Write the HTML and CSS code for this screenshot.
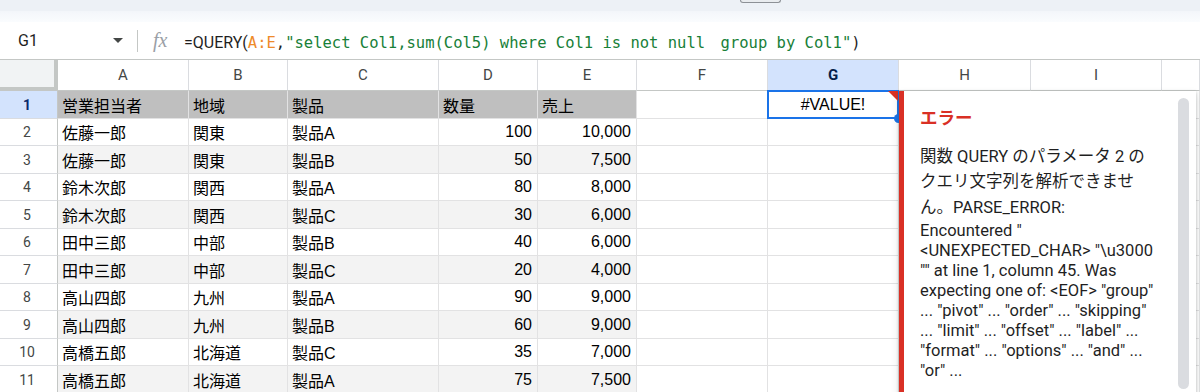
FILE: index.html
```html
<!DOCTYPE html>
<html lang="ja">
<head>
  <meta charset="UTF-8" />
  <title>Sheet - QUERY error</title>
  <link rel="stylesheet" href="styles.css">
</head>
<body>
  <div class="topbar"><span class="tabstub"></span></div>
  <div class="topfade"></div>

  <div class="formula-bar">
    <div class="namebox"><span>G1</span><span class="caret"></span></div>
    <div class="fbar-divider"></div>
    <span class="fx">fx</span>
    <div class="formula"><span class="fn">=QUERY(</span><span class="ref">A:E</span>,<span class="str">"select Col1,sum(Col5) where Col1 is not null　group by Col1"</span>)</div>
  </div>

  <div class="sheet">
    <div class="row header-row">
      <div class="corner"></div>
      <div class="colhead">A</div>
      <div class="colhead">B</div>
      <div class="colhead">C</div>
      <div class="colhead">D</div>
      <div class="colhead">E</div>
      <div class="colhead">F</div>
      <div class="colhead active">G</div>
      <div class="colhead">H</div>
      <div class="colhead">I</div>
      <div class="colhead"></div>
    </div>

    <div class="row titles">
      <div class="rownum active">1</div>
      <div class="cell">営業担当者</div>
      <div class="cell">地域</div>
      <div class="cell">製品</div>
      <div class="cell">数量</div>
      <div class="cell">売上</div>
      <div class="cell blank"></div>
      <div class="cell blank selected">#VALUE!<span class="handle"></span></div>
      <div class="cell blank"></div>
      <div class="cell blank"></div>
      <div class="cell blank"></div>
    </div>

    <div class="row">
      <div class="rownum">2</div>
      <div class="cell">佐藤一郎</div><div class="cell">関東</div><div class="cell">製品A</div>
      <div class="cell num">100</div><div class="cell num">10,000</div>
      <div class="cell blank"></div><div class="cell blank"></div><div class="cell blank"></div><div class="cell blank"></div><div class="cell blank"></div>
    </div>
    <div class="row band">
      <div class="rownum">3</div>
      <div class="cell">佐藤一郎</div><div class="cell">関東</div><div class="cell">製品B</div>
      <div class="cell num">50</div><div class="cell num">7,500</div>
      <div class="cell blank"></div><div class="cell blank"></div><div class="cell blank"></div><div class="cell blank"></div><div class="cell blank"></div>
    </div>
    <div class="row">
      <div class="rownum">4</div>
      <div class="cell">鈴木次郎</div><div class="cell">関西</div><div class="cell">製品A</div>
      <div class="cell num">80</div><div class="cell num">8,000</div>
      <div class="cell blank"></div><div class="cell blank"></div><div class="cell blank"></div><div class="cell blank"></div><div class="cell blank"></div>
    </div>
    <div class="row band">
      <div class="rownum">5</div>
      <div class="cell">鈴木次郎</div><div class="cell">関西</div><div class="cell">製品C</div>
      <div class="cell num">30</div><div class="cell num">6,000</div>
      <div class="cell blank"></div><div class="cell blank"></div><div class="cell blank"></div><div class="cell blank"></div><div class="cell blank"></div>
    </div>
    <div class="row">
      <div class="rownum">6</div>
      <div class="cell">田中三郎</div><div class="cell">中部</div><div class="cell">製品B</div>
      <div class="cell num">40</div><div class="cell num">6,000</div>
      <div class="cell blank"></div><div class="cell blank"></div><div class="cell blank"></div><div class="cell blank"></div><div class="cell blank"></div>
    </div>
    <div class="row band">
      <div class="rownum">7</div>
      <div class="cell">田中三郎</div><div class="cell">中部</div><div class="cell">製品C</div>
      <div class="cell num">20</div><div class="cell num">4,000</div>
      <div class="cell blank"></div><div class="cell blank"></div><div class="cell blank"></div><div class="cell blank"></div><div class="cell blank"></div>
    </div>
    <div class="row">
      <div class="rownum">8</div>
      <div class="cell">高山四郎</div><div class="cell">九州</div><div class="cell">製品A</div>
      <div class="cell num">90</div><div class="cell num">9,000</div>
      <div class="cell blank"></div><div class="cell blank"></div><div class="cell blank"></div><div class="cell blank"></div><div class="cell blank"></div>
    </div>
    <div class="row band">
      <div class="rownum">9</div>
      <div class="cell">高山四郎</div><div class="cell">九州</div><div class="cell">製品B</div>
      <div class="cell num">60</div><div class="cell num">9,000</div>
      <div class="cell blank"></div><div class="cell blank"></div><div class="cell blank"></div><div class="cell blank"></div><div class="cell blank"></div>
    </div>
    <div class="row">
      <div class="rownum">10</div>
      <div class="cell">高橋五郎</div><div class="cell">北海道</div><div class="cell">製品C</div>
      <div class="cell num">35</div><div class="cell num">7,000</div>
      <div class="cell blank"></div><div class="cell blank"></div><div class="cell blank"></div><div class="cell blank"></div><div class="cell blank"></div>
    </div>
    <div class="row band">
      <div class="rownum">11</div>
      <div class="cell">高橋五郎</div><div class="cell">北海道</div><div class="cell">製品A</div>
      <div class="cell num">75</div><div class="cell num">7,500</div>
      <div class="cell blank"></div><div class="cell blank"></div><div class="cell blank"></div><div class="cell blank"></div><div class="cell blank"></div>
    </div>

    <!-- error popup over G1 -->
    <div class="error-popup">
      <div class="error-title">エラー</div>
      <div class="error-body">
        <div class="ln jp">関数 QUERY のパラメータ 2 の</div>
        <div class="ln jp">クエリ文字列を解析できませ</div>
        <div class="ln jp mixed">ん。PARSE_ERROR:</div>
        <div class="ln">Encountered "</div>
        <div class="ln">&lt;UNEXPECTED_CHAR&gt; "\u3000</div>
        <div class="ln">"" at line 1, column 45. Was</div>
        <div class="ln">expecting one of: &lt;EOF&gt; "group"</div>
        <div class="ln">... "pivot" ... "order" ... "skipping"</div>
        <div class="ln">... "limit" ... "offset" ... "label" ...</div>
        <div class="ln">"format" ... "options" ... "and" ...</div>
        <div class="ln">"or" ...</div>
      </div>
      <div class="scrollbar"></div>
    </div>
  </div>
</body>
</html>
```

FILE: styles.css
```css
* {
  box-sizing: border-box;
}
body {
  margin: 0;
  width: 1200px;
  height: 392px;
  overflow: hidden;
  background: #fff;
  font-family: Roboto, "Noto Sans CJK JP", sans-serif;
  color: #1f1f1f;
}

.topbar {
  display: flex;
  height: 11px;
  background: #edf1f6;
}
.tabstub {
  margin-left: 740px;
  width: 41px;
  height: 3px;
  border: 1px solid #8d9196;
  border-top: none;
  border-radius: 0 0 4px 4px;
  background: #e9ecef;
}
.topfade {
  height: 11px;
  background: linear-gradient(#f3f6fa, #fafcfe);
}

.formula-bar {
  display: flex;
  align-items: center;
  height: 38px;
  border-bottom: 1px solid #c4c7c5;
}
.namebox {
  display: flex;
  align-items: center;
  justify-content: space-between;
  width: 137px;
  padding: 0 14px 0 18px;
  font-size: 16px;
}
.caret {
  width: 0;
  height: 0;
  border-left: 5px solid transparent;
  border-right: 5px solid transparent;
  border-top: 5px solid #444746;
}
.fbar-divider {
  width: 1px;
  height: 22px;
  background: #c4c7c5;
}
.fx {
  margin-left: 15px;
  width: 20px;
  font-family: "Liberation Serif", serif;
  font-style: italic;
  font-size: 20px;
  color: #9aa0a6;
}
.formula {
  margin-left: 11px;
  font-family: "DejaVu Sans Mono", "Noto Sans CJK JP", monospace;
  font-size: 15.5px;
  color: #1f1f1f;
  white-space: pre;
}
.formula .fn {
  font-family: Roboto, sans-serif;
  font-size: 16px;
}
.formula .ref {
  color: #ee8a2a;
}
.formula .str {
  color: #188038;
}

.sheet {
  position: relative;
}
.row {
  display: grid;
  grid-template-columns: 58px 131px 99px 151px 99px 99px 131px 131px 132px 131px 38px;
  height: 28px;
}
.row:nth-child(odd) {
  height: 27px;
}
.header-row {
  height: 31px !important;
}

.corner {
  background: #f1f3f4;
  border-right: 4px solid #c4c7c5;
  border-bottom: 4px solid #c4c7c5;
}
.colhead {
  display: flex;
  align-items: center;
  justify-content: center;
  font-size: 15px;
  color: #444746;
  border-right: 1px solid #dadce0;
  border-bottom: 1px solid #c4c7c5;
}
.colhead.active {
  background: #d3e3fd;
  color: #041e49;
  font-weight: bold;
}

.rownum {
  display: flex;
  align-items: center;
  justify-content: center;
  padding-right: 3px;
  font-size: 14px;
  color: #444746;
  border-right: 1px solid #c4c7c5;
  border-bottom: 1px solid #dadce0;
}
.rownum.active {
  background: #d3e3fd;
  color: #0b2a6b;
  font-weight: bold;
}

.cell {
  display: flex;
  align-items: center;
  padding: 0 4px;
  font-family: "Liberation Sans", "Noto Sans CJK JP", sans-serif;
  font-size: 16px;
  color: #000;
  white-space: nowrap;
  border-right: 1px solid #e2e2e3;
  border-bottom: 1px solid #e2e2e3;
}
.cell.num {
  justify-content: flex-end;
  padding-right: 5px;
}
.titles .cell {
  background: #bfbfbf;
}
.band .cell {
  background: #f3f3f3;
}
.titles .cell.blank,
.band .cell.blank {
  background: #fff;
}

.cell.selected {
  position: relative;
  justify-content: center;
}
.cell.selected::before {
  content: "";
  position: absolute;
  top: -1px;
  left: -1px;
  right: -1px;
  bottom: -1px;
  border: 2px solid #1a73e8;
}
.cell.selected::after {
  content: "";
  position: absolute;
  top: 0;
  right: 0;
  border-top: 10px solid #d93025;
  border-left: 10px solid transparent;
}
.handle {
  position: absolute;
  right: -5px;
  bottom: -5px;
  width: 9px;
  height: 9px;
  border-radius: 50%;
  background: #1a73e8;
  z-index: 1;
}

.error-popup {
  position: absolute;
  left: 899px;
  top: 31px;
  width: 297px;
  height: 320px;
  padding: 15px 0 0 16px;
  background: #fff;
  border-left: 5px solid #d93025;
  box-shadow: 0 1px 3px rgba(60, 64, 67, 0.3), 0 4px 8px rgba(60, 64, 67, 0.15);
  z-index: 2;
}
.error-title {
  font-size: 17.5px;
  line-height: 25px;
  font-weight: bold;
  color: #d93025;
}
.error-body {
  margin-top: 13px;
  font-size: 16.5px;
  color: #1f1f1f;
  white-space: nowrap;
}
.ln {
  height: 20px;
  line-height: 20px;
}
.ln.jp {
  height: 25px;
  line-height: 25px;
}
.ln.mixed {
  height: 27px;
  line-height: 27px;
}
.scrollbar {
  position: absolute;
  top: 7px;
  right: 7px;
  width: 11px;
  height: 291px;
  border-radius: 6px;
  background: #dadce0;
}
```
